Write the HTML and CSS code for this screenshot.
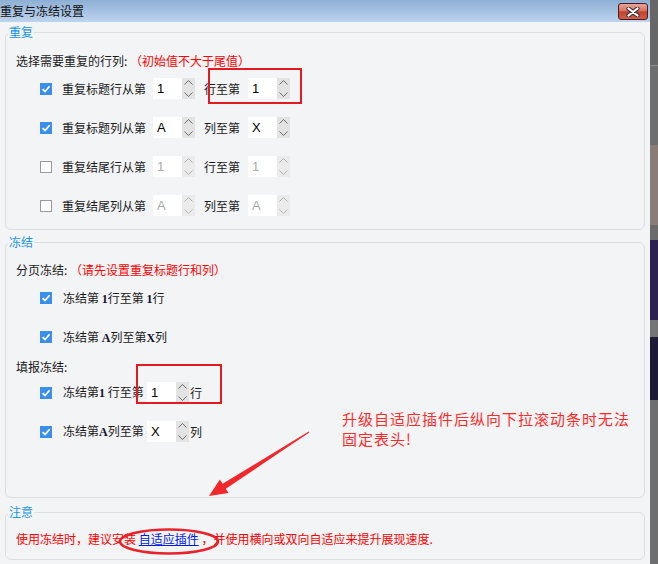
FILE: index.html
```html
<!DOCTYPE html>
<html lang="zh-CN">
<head>
<meta charset="utf-8">
<title>重复与冻结设置</title>
<link rel="stylesheet" href="styles.css">
</head>
<body>
<div class="screen">
  <div class="dialog">
    <div class="titlebar">
      <span class="title">重复与冻结设置</span>
      <span class="close">
        <svg width="14" height="10" viewBox="0 0 14 10"><path d="M2.5 1.5 L11.5 8.5 M11.5 1.5 L2.5 8.5" stroke="#3d3440" stroke-width="4.2" stroke-linecap="round"/><path d="M2.5 1.5 L11.5 8.5 M11.5 1.5 L2.5 8.5" stroke="#ffffff" stroke-width="2.2" stroke-linecap="round"/></svg>
      </span>
    </div>
    <div class="body">
      <fieldset class="group">
        <legend>重复</legend>
        <div class="g-body g-repeat">
          <div class="line">选择需要重复的行列: <span class="warn">（初始值不大于尾值）</span></div>
          <div class="rows">
            <div class="row">
              <span class="cb on"><svg width="12" height="12" viewBox="0 0 12 12"><path d="M2.6 6.2 L5 8.6 L9.6 3.2" fill="none" stroke="#fff" stroke-width="1.7"/></svg></span>
              <span class="lbl">重复标题行从第</span>
              <span class="spin"><span class="spin-val">1</span><span class="spin-btn"><svg width="13" height="21" viewBox="0 0 13 21"><path d="M2.5 6.5 L6.5 2.5 L10.5 6.5 M2.5 14.5 L6.5 18.5 L10.5 14.5" fill="none" stroke="#6a6a6a" stroke-width="1"/></svg></span></span>
              <span class="lbl2">行至第</span>
              <span class="spin"><span class="spin-val">1</span><span class="spin-btn"><svg width="13" height="21" viewBox="0 0 13 21"><path d="M2.5 6.5 L6.5 2.5 L10.5 6.5 M2.5 14.5 L6.5 18.5 L10.5 14.5" fill="none" stroke="#6a6a6a" stroke-width="1"/></svg></span></span>
            </div>
            <div class="row">
              <span class="cb on"><svg width="12" height="12" viewBox="0 0 12 12"><path d="M2.6 6.2 L5 8.6 L9.6 3.2" fill="none" stroke="#fff" stroke-width="1.7"/></svg></span>
              <span class="lbl">重复标题列从第</span>
              <span class="spin"><span class="spin-val">A</span><span class="spin-btn"><svg width="13" height="21" viewBox="0 0 13 21"><path d="M2.5 6.5 L6.5 2.5 L10.5 6.5 M2.5 14.5 L6.5 18.5 L10.5 14.5" fill="none" stroke="#6a6a6a" stroke-width="1"/></svg></span></span>
              <span class="lbl2">列至第</span>
              <span class="spin"><span class="spin-val">X</span><span class="spin-btn"><svg width="13" height="21" viewBox="0 0 13 21"><path d="M2.5 6.5 L6.5 2.5 L10.5 6.5 M2.5 14.5 L6.5 18.5 L10.5 14.5" fill="none" stroke="#6a6a6a" stroke-width="1"/></svg></span></span>
            </div>
            <div class="row">
              <span class="cb"></span>
              <span class="lbl">重复结尾行从第</span>
              <span class="spin dis"><span class="spin-val">1</span><span class="spin-btn"><svg width="13" height="21" viewBox="0 0 13 21"><path d="M2.5 6.5 L6.5 2.5 L10.5 6.5 M2.5 14.5 L6.5 18.5 L10.5 14.5" fill="none" stroke="#b4b4b4" stroke-width="1"/></svg></span></span>
              <span class="lbl2">行至第</span>
              <span class="spin dis"><span class="spin-val">1</span><span class="spin-btn"><svg width="13" height="21" viewBox="0 0 13 21"><path d="M2.5 6.5 L6.5 2.5 L10.5 6.5 M2.5 14.5 L6.5 18.5 L10.5 14.5" fill="none" stroke="#b4b4b4" stroke-width="1"/></svg></span></span>
            </div>
            <div class="row">
              <span class="cb"></span>
              <span class="lbl">重复结尾列从第</span>
              <span class="spin dis"><span class="spin-val">A</span><span class="spin-btn"><svg width="13" height="21" viewBox="0 0 13 21"><path d="M2.5 6.5 L6.5 2.5 L10.5 6.5 M2.5 14.5 L6.5 18.5 L10.5 14.5" fill="none" stroke="#b4b4b4" stroke-width="1"/></svg></span></span>
              <span class="lbl2">列至第</span>
              <span class="spin dis"><span class="spin-val">A</span><span class="spin-btn"><svg width="13" height="21" viewBox="0 0 13 21"><path d="M2.5 6.5 L6.5 2.5 L10.5 6.5 M2.5 14.5 L6.5 18.5 L10.5 14.5" fill="none" stroke="#b4b4b4" stroke-width="1"/></svg></span></span>
            </div>
          </div>
        </div>
      </fieldset>

      <fieldset class="group g2">
        <legend>冻结</legend>
        <div class="g-body g-freeze">
          <div class="line">分页冻结: <span class="warn">（请先设置重复标题行和列）</span></div>
          <div class="crow r1">
            <span class="cb on"><svg width="12" height="12" viewBox="0 0 12 12"><path d="M2.6 6.2 L5 8.6 L9.6 3.2" fill="none" stroke="#fff" stroke-width="1.7"/></svg></span>
            <span>冻结第 <b class="v">1</b>行至第 <b class="v">1</b>行</span>
          </div>
          <div class="crow r2">
            <span class="cb on"><svg width="12" height="12" viewBox="0 0 12 12"><path d="M2.6 6.2 L5 8.6 L9.6 3.2" fill="none" stroke="#fff" stroke-width="1.7"/></svg></span>
            <span>冻结第 <b class="v">A</b>列至第<b class="v">X</b>列</span>
          </div>
          <div class="line l2">填报冻结:</div>
          <div class="srow r3">
            <span class="cb on"><svg width="12" height="12" viewBox="0 0 12 12"><path d="M2.6 6.2 L5 8.6 L9.6 3.2" fill="none" stroke="#fff" stroke-width="1.7"/></svg></span>
            <span class="flbl">冻结第<b class="v">1</b> 行至第</span>
            <span class="spin"><span class="spin-val">1</span><span class="spin-btn"><svg width="13" height="21" viewBox="0 0 13 21"><path d="M2.5 6.5 L6.5 2.5 L10.5 6.5 M2.5 14.5 L6.5 18.5 L10.5 14.5" fill="none" stroke="#6a6a6a" stroke-width="1"/></svg></span></span>
            <span class="unit">行</span>
          </div>
          <div class="srow r4">
            <span class="cb on"><svg width="12" height="12" viewBox="0 0 12 12"><path d="M2.6 6.2 L5 8.6 L9.6 3.2" fill="none" stroke="#fff" stroke-width="1.7"/></svg></span>
            <span class="flbl">冻结第<b class="v">A</b>列至第</span>
            <span class="spin"><span class="spin-val">X</span><span class="spin-btn"><svg width="13" height="21" viewBox="0 0 13 21"><path d="M2.5 6.5 L6.5 2.5 L10.5 6.5 M2.5 14.5 L6.5 18.5 L10.5 14.5" fill="none" stroke="#6a6a6a" stroke-width="1"/></svg></span></span>
            <span class="unit">列</span>
          </div>
        </div>
      </fieldset>

      <fieldset class="group g3">
        <legend>注意</legend>
        <div class="g-body g-note">
          <div class="line warn">使用冻结时，建议安装 <a class="link" href="#">自适应插件</a> ，并使用横向或双向自适应来提升展现速度.</div>
        </div>
      </fieldset>
    </div>

    <div class="mark mark-a"></div>
    <div class="mark mark-b"></div>
    <svg class="ring" width="102" height="29" viewBox="0 0 102 29"><ellipse cx="51" cy="14.5" rx="49" ry="12" fill="none" stroke="#e8222a" stroke-width="2.5"/></svg>
    <svg class="arrow" width="120" height="80" viewBox="0 0 120 80"><polygon points="108.7,6.6 22.6,58.8 19.9,54.6 9,71 28.5,68 25.8,63.8 109.3,7.4" fill="#f0282c"/></svg>
    <div class="note">
      <div class="note-line">升级自适应插件后纵向下拉滚动条时无法</div>
      <div class="note-line">固定表头!</div>
    </div>
  </div>
  <div class="strip">
    <span class="s s1"></span><span class="s s2"></span><span class="s s3"></span><span class="s s4"></span><span class="s s5"></span><span class="s s6"></span><span class="s s7"></span><span class="s s8"></span><span class="s s9"></span>
  </div>
</div>
</body>
</html>
```

FILE: styles.css
```css
* { box-sizing: border-box; }

body {
  margin: 0;
  background: #6c6c6c;
  font-family: "Noto Sans CJK SC", "Liberation Sans", sans-serif;
  font-size: 12px;
  line-height: 14px;
  color: #1a1a1a;
}

.screen {
  display: flex;
  width: 658px;
  height: 564px;
  overflow: hidden;
}

.dialog {
  position: relative;
  flex: none;
  width: 650px;
  height: 564px;
  background: #f3f4f6;
}

.titlebar {
  height: 22px;
  display: flex;
  justify-content: space-between;
  background: linear-gradient(#8eafd5, #bcd4ee);
}

.title {
  line-height: 22px;
  color: #111;
}

.close {
  margin: 3px 2px 0 0;
  width: 30px;
  height: 17px;
  border: 1px solid #4c1822;
  border-radius: 3px;
  background: linear-gradient(#e9a596 0%, #d9735f 45%, #c2442d 52%, #cf5e44 100%);
  display: flex;
  align-items: center;
  justify-content: center;
}

.body {
  padding: 3px 5px 0 5px;
  display: flex;
  flex-direction: column;
}

.group {
  margin: 0;
  padding: 0;
  min-width: 0;
  border: 1px solid #dcdee2;
  border-radius: 6px;
}

.group legend {
  margin-left: 2px;
  padding: 0 1px;
  color: #1a96e0;
  line-height: 14px;
}

.g2 { margin-top: 5px; }
.g3 { margin-top: 7px; }

.g-body { padding: 0 10px; }
.g-repeat { padding-top: 15px; padding-bottom: 13px; }
.g-freeze { padding-top: 14px; padding-bottom: 55px; }
.g-note { padding-top: 13px; padding-bottom: 13px; }

.line { height: 14px; white-space: nowrap; }
.warn { color: #ff0000; }

.rows {
  margin-top: 10px;
  padding-left: 24px;
  display: flex;
  flex-direction: column;
  gap: 18px;
}

.row, .srow {
  display: flex;
  align-items: center;
  height: 21px;
}

.cb {
  flex: none;
  width: 12px;
  height: 12px;
  margin-right: 10px;
  border: 1px solid #9a9a9a;
  background: #fff;
  display: flex;
}

.cb.on {
  border: none;
  background: #3b8fea;
}

.lbl { width: 91px; }
.lbl2 { width: 44px; margin-left: 9px; }

.spin {
  flex: none;
  display: flex;
  width: 42px;
  height: 21px;
}

.spin-val {
  width: 29px;
  background: #fff;
  padding-left: 4px;
  font-family: "Liberation Sans", sans-serif;
  font-size: 13px;
  line-height: 21px;
  color: #000;
}

.spin-btn {
  width: 13px;
  background: #e3e3e3;
  display: flex;
}

.spin.dis .spin-val { color: #a9a9a9; }
.spin.dis .spin-btn { background: #ebebeb; }

.crow {
  display: flex;
  align-items: center;
  height: 14px;
  padding-left: 24px;
}

.crow .cb, .srow .cb { margin-right: 11px; }

.crow.r1 { margin-top: 14px; }
.crow.r2 { margin-top: 25px; }
.l2 { margin-top: 16px; }
.srow { padding-left: 24px; }
.srow.r3 { margin-top: 8px; }
.srow.r4 { margin-top: 18px; }

.v {
  font-family: "Liberation Serif", serif;
  font-weight: bold;
  color: #101030;
}

.flbl { width: 84px; white-space: nowrap; }
.unit { margin-left: 1px; }

.link {
  color: #0018e8;
  text-decoration: underline;
}

.mark {
  position: absolute;
  border: 2px solid #e21b23;
}

.mark-a { left: 208px; top: 68px; width: 94px; height: 36px; }
.mark-b { left: 136px; top: 364px; width: 86px; height: 40px; }

.ring { position: absolute; left: 118px; top: 527px; }
.arrow { position: absolute; left: 200px; top: 425px; }

.note {
  position: absolute;
  left: 342px;
  top: 409px;
  display: flex;
  flex-direction: column;
  color: #ff2b2b;
  white-space: nowrap;
}

.note-line {
  height: 20px;
  font-size: 15px;
  letter-spacing: 1px;
  line-height: 20px;
}

.strip {
  flex: none;
  width: 8px;
  display: flex;
  flex-direction: column;
}

.s { display: block; flex: none; }
.s1 { height: 65px; background: #676767; }
.s2 { height: 1px; background: #8c8c8c; }
.s3 { height: 79px; background: #6e6e6e; }
.s4 { height: 80px; background: #8a7d77; }
.s5 { height: 15px; background: #6b6b6b; }
.s6 { height: 80px; background: #2d2352; }
.s7 { height: 17px; background: #747474; }
.s8 { height: 63px; background: #1c1a34; }
.s9 { height: 164px; background: #6e6e6e; }
```
